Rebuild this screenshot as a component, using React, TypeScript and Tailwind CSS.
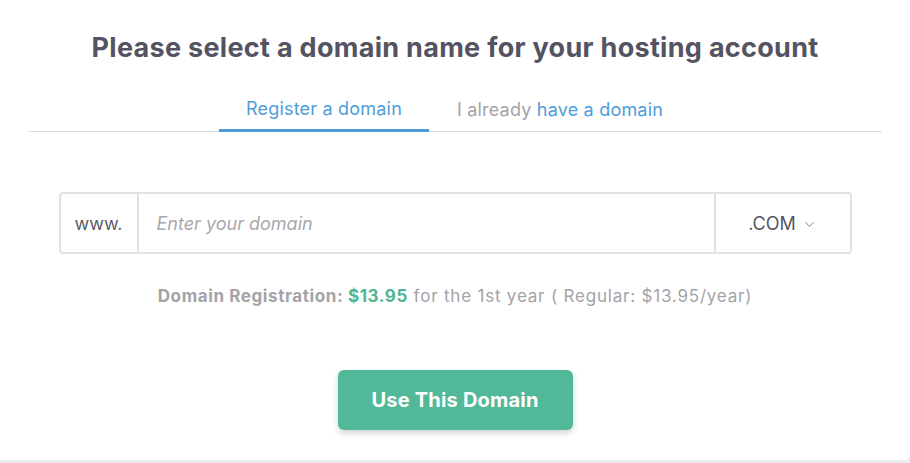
import { ChevronDown } from 'lucide-react';

export default function App() {
  return (
    <main className="h-[463px] w-[910px] overflow-hidden bg-[#ececf1] font-['Inter',sans-serif]">
      <section className="flex h-[460px] flex-col items-center rounded-br-md bg-white px-7">
        <h1 className="mt-[31px] text-[27px] font-bold leading-[34px] tracking-[0.3px] text-[#545362]">
          Please select a domain name for your hosting account
        </h1>

        <nav className="mt-[30px] flex w-full justify-center border-b border-[#dcdcdf]">
          <button className="-mb-px w-[210px] border-b-[3px] border-[#4d9ddc] pb-[7px] text-[18px] leading-[27px] tracking-[0.2px] text-[#4d9ddc]">
            Register a domain
          </button>
          <button className="w-[262px] pb-[7px] text-[18px] leading-[27px] tracking-[0.2px] text-[#a3a3a8]">
            I already <span className="text-[#4d9ddc]">have a domain</span>
          </button>
        </nav>

        <div className="mt-[60px] flex h-[62px] w-[793px] rounded border-2 border-[#e2e2e4] text-[18px]">
          <span className="flex w-[78px] items-center justify-center border-r-2 border-[#e2e2e4] text-[#5a5a66]">
            www.
          </span>
          <input
            placeholder="Enter your domain"
            className="flex-1 px-[18px] italic text-[#5a5a66] outline-none placeholder:text-[#a8a8ae]"
          />
          <button className="flex w-[136px] items-center justify-center gap-1.5 border-l-2 border-[#e2e2e4] text-[18px] text-[#55555f]">
            .COM
            <ChevronDown size={15} strokeWidth={1.5} className="mt-0.5 text-[#7a7a82]" />
          </button>
        </div>

        <p className="mt-[30px] text-[17px] leading-[25px] tracking-[0.8px] text-[#a3a3a8]">
          <b className="font-bold tracking-[0.6px]">Domain Registration: </b>
          <b className="font-bold tracking-[0.6px] text-[#4fb590]">$13.95</b> for the 1st year ( Regular: $13.95/year)
        </p>

        <button className="mt-[61px] h-[60px] w-[235px] rounded-md bg-[#52b89a] text-[20px] font-bold tracking-[0.2px] text-white shadow-[0_3px_6px_rgba(0,0,0,0.18)]">
          Use This Domain
        </button>
      </section>
    </main>
  );
}
